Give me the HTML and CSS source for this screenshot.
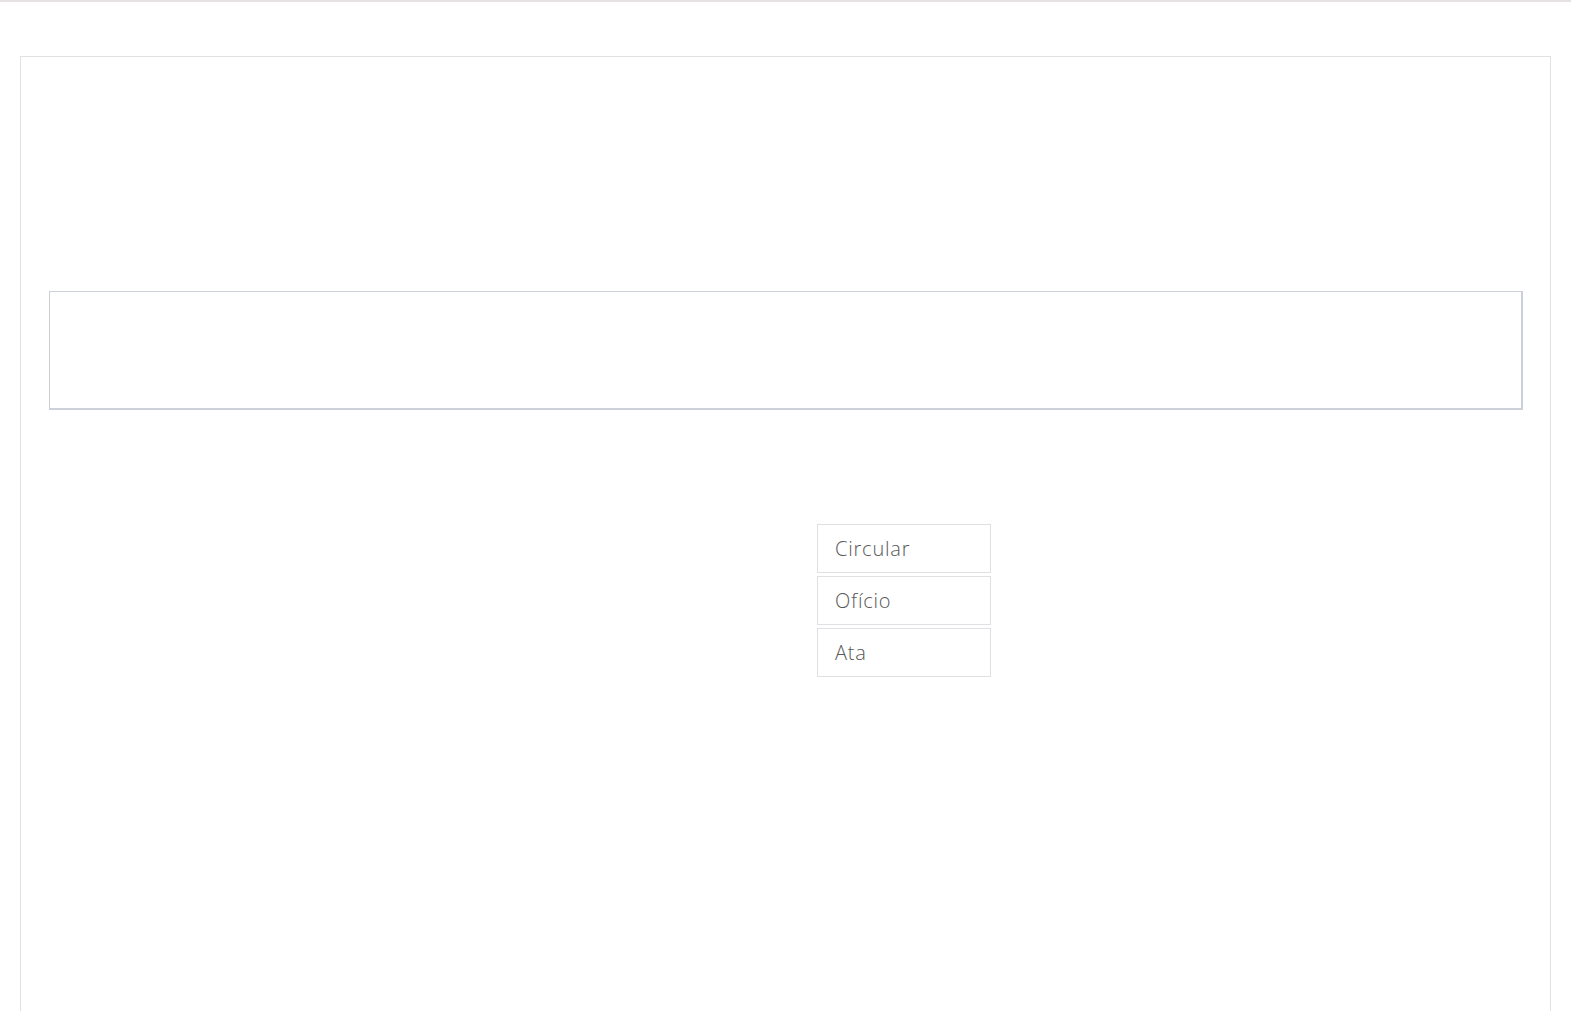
FILE: index.html
```html
<!DOCTYPE html>
<html lang="pt">
<head>
<meta charset="utf-8">
<title>Documentos</title>
<link rel="stylesheet" href="styles.css">
</head>
<body>
<div class="topbar"></div>
<div class="frame">
  <div class="panel"></div>
  <ul class="doc-list">
    <li class="doc-item">Circular</li>
    <li class="doc-item">Ofício</li>
    <li class="doc-item">Ata</li>
  </ul>
</div>
</body>
</html>
```

FILE: styles.css
```css
html, body {
  margin: 0;
  padding: 0;
  background: #ffffff;
  height: 100%;
  overflow: hidden;
}
body {
  font-family: "Open Sans", Lato, "Liberation Sans", sans-serif;
}
.topbar {
  height: 2px;
  background: #e6e2e2;
}
.frame {
  margin: 54px 20px 0 20px;
  border: 1px solid #e2e2e2;
  border-bottom: none;
  padding: 234px 27px 0 28px;
  height: 1200px;
  box-sizing: border-box;
}
.panel {
  height: 116px;
  border: 1px solid #ccd0d8;
  border-right-width: 2px;
  border-bottom-width: 2px;
  background: #fff;
}
.doc-list {
  list-style: none;
  margin: 114px 0 0 768px;
  padding: 0;
  width: 174px;
  display: flex;
  flex-direction: column;
  gap: 3px;
}
.doc-item {
  box-sizing: border-box;
  height: 49px;
  border: 1px solid #e0e0e4;
  padding: 0 17px;
  display: flex;
  align-items: center;
  font-size: 20px;
  font-weight: 300;
  letter-spacing: 0.8px;
  color: #585858;
}
```
